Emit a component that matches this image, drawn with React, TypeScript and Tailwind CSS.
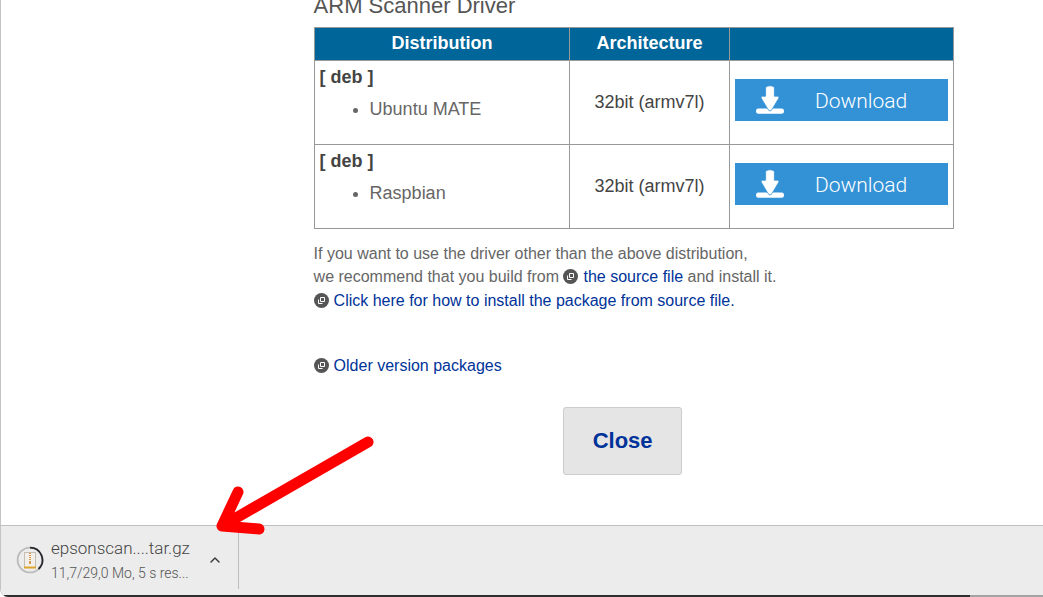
import React from 'react';
import { ChevronUp } from 'lucide-react';

const drivers = [
  { format: '[ deb ]', distribution: 'Ubuntu MATE', architecture: '32bit (armv7l)' },
  { format: '[ deb ]', distribution: 'Raspbian', architecture: '32bit (armv7l)' },
];

const DownloadIcon = () => (
  <svg width="30" height="30" viewBox="0 0 30 30" fill="#fff" aria-hidden="true">
    <rect x="1" y="23.6" width="28" height="5.2" rx="2.4" />
    <path
      d="M10.6 3.5Q10.6 .8 15 .8T19.4 3.5V11.2H22.6Q24.8 11.4 23.6 13.4L17 24.6Q15 27.6 13 24.6L6.4 13.4Q5.2 11.4 7.4 11.2H10.6Z"
      stroke="#3392d6"
      strokeWidth=".8"
    />
  </svg>
);

const WindowIcon = () => (
  <svg className="mr-[5px] inline-block align-[-2px]" width="15" height="15" viewBox="0 0 15 15" fill="none" aria-hidden="true">
    <circle cx="7.5" cy="7.5" r="7.5" fill="#555" />
    <path d="M6.5 4.5H10.5V8.5H6.5ZM4.5 6.5V10.5H8.5" stroke="#fff" strokeWidth="1" />
  </svg>
);

const TextLink = ({ children }: { children: React.ReactNode }) => (
  <a href="#" className="text-[#003399] hover:underline">
    <WindowIcon />
    {children}
  </a>
);

const ArchiveProgress = () => (
  <svg width="28" height="28" viewBox="0 0 28 28" fill="none" aria-hidden="true">
    <circle cx="14" cy="14" r="12.4" stroke="#b9bbbd" strokeWidth="1.8" />
    <path d="M14 1.6A12.4 12.4 0 0 1 22.5 23" stroke="#26282c" strokeWidth="1.8" />
    <rect x="8.5" y="6.5" width="11" height="15" fill="#f3efea" stroke="#c5bdb2" />
    <path d="M8 21.5H20" stroke="#dda52e" strokeWidth="2" />
    <path d="M14 7V14" stroke="#d39a48" strokeWidth="2" strokeDasharray="1 1" />
    <path d="M14 15V18" stroke="#d39a48" strokeWidth="2" />
  </svg>
);

const DriverTable = () => (
  <table className="w-full table-fixed border-collapse text-[18px] leading-6 text-[#444]">
    <thead>
      <tr className="h-[33px] bg-[#006699] text-white">
        <th className="w-[40%] border border-[#999] pb-0.5">Distribution</th>
        <th className="w-[25%] border border-[#999] pb-0.5">Architecture</th>
        <th className="border border-[#999]" aria-label="Download" />
      </tr>
    </thead>
    <tbody>
      {drivers.map((driver) => (
        <tr key={driver.distribution} className="h-[84px]">
          <td className="border border-[#999] px-[5px] pt-1 align-top">
            <strong>{driver.format}</strong>
            <ul className="mt-2 list-disc pl-[50px] text-[#666]">
              <li>{driver.distribution}</li>
            </ul>
          </td>
          <td className="border border-[#999] pb-0.5 text-center">{driver.architecture}</td>
          <td className="border border-[#999] px-[5px] pb-1.5">
            <button type="button" className="flex h-[42px] w-full items-center bg-[#3392d6] pl-5 text-white">
              <DownloadIcon />
              <span className="ml-[30px] pt-0.5 font-[Roboto,sans-serif] text-[21px] font-light">Download</span>
            </button>
          </td>
        </tr>
      ))}
    </tbody>
  </table>
);

const DownloadShelf = () => (
  <footer className="relative flex h-[72px] border-t border-b-2 border-t-[#bfbfbf] border-b-[#2d2d2d] bg-[#ececec] font-[Roboto,sans-serif] font-light">
    <div className="mt-1 mb-1.5 flex items-center border-r border-[#bdbdbd] pr-[15px] pl-[15px]">
      <ArchiveProgress />
      <div className="ml-[7px]">
        <p className="text-[17px] leading-[26px] text-[#444]">epsonscan....tar.gz</p>
        <p className="text-[14px] leading-6 text-[#555]">11,7/29,0 Mo, 5 s res...</p>
      </div>
      <button type="button" aria-label="Download options" className="ml-[17px] text-[#333]">
        <ChevronUp size={16} />
      </button>
    </div>
    {/* Arrow pointing at the running download */}
    <svg className="absolute -top-[92px] left-[209px]" width="170" height="106" viewBox="0 0 170 106" fill="none" aria-hidden="true">
      <path d="M158 8L12 92M28 58L12 92L49 95" stroke="#ff0000" strokeWidth="11" strokeLinecap="round" strokeLinejoin="round" />
    </svg>
    <div className="absolute right-0 -bottom-0.5 h-0.5 w-[7%] bg-[#a3a3a3]" />
  </footer>
);

export default function App() {
  return (
    <div className="flex min-h-screen flex-col overflow-hidden rounded-bl-lg border-l border-[#c4c4c4] bg-white font-['Liberation_Sans',Arial,sans-serif]">
      <main className="ml-[30%] w-full max-w-[640px] flex-1">
        <h1 className="-mt-1.5 mb-[9px] text-[22px] leading-6 text-[#555]">ARM Scanner Driver</h1>
        <DriverTable />
        <div className="mt-[13px] text-[16px] leading-[23px] text-[#666]">
          <p>
            If you want to use the driver other than the above distribution,
            <br />
            we recommend that you build from <TextLink>the source file</TextLink> and install it.
          </p>
          <p className="mt-px"><TextLink>Click here for how to install the package from source file.</TextLink></p>
          <p className="mt-[42px]"><TextLink>Older version packages</TextLink></p>
        </div>
        <div className="mt-[30px] flex justify-center pr-[22px]">
          <button type="button" className="h-[68px] w-[119px] rounded-[3px] border border-[#ccc] bg-[#e5e5e5] pb-0.5 text-[22px] font-bold text-[#003399]">
            Close
          </button>
        </div>
      </main>
      <DownloadShelf />
    </div>
  );
}
